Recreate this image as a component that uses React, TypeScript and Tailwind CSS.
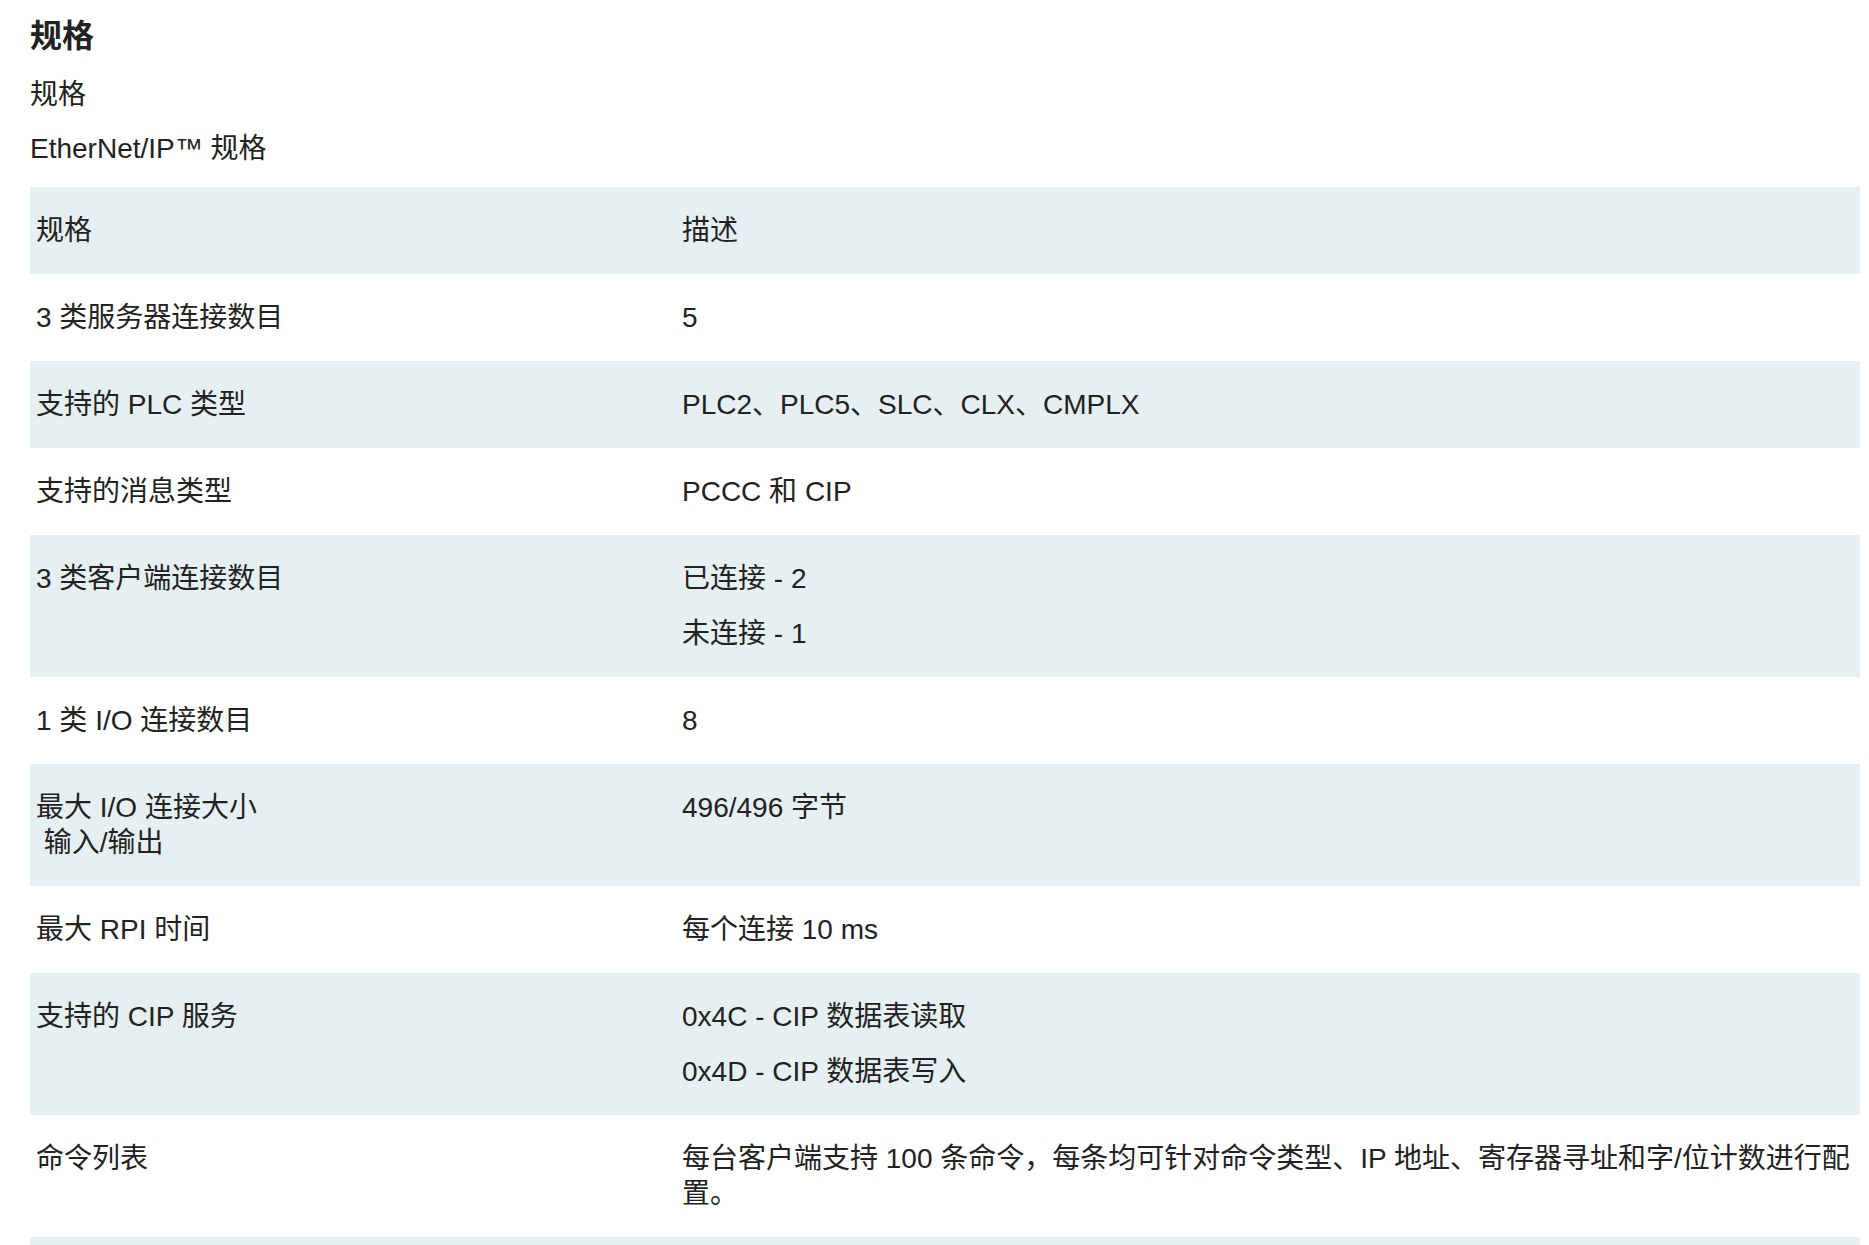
const FONT = "font-['Liberation_Sans','Noto_Sans_CJK_SC',sans-serif]"

const ROWS: { spec: string[]; desc: string[] }[] = [
  { spec: ['3 类服务器连接数目'], desc: ['5'] },
  { spec: ['支持的 PLC 类型'], desc: ['PLC2、PLC5、SLC、CLX、CMPLX'] },
  { spec: ['支持的消息类型'], desc: ['PCCC 和 CIP'] },
  { spec: ['3 类客户端连接数目'], desc: ['已连接 - 2', '未连接 - 1'] },
  { spec: ['1 类 I/O 连接数目'], desc: ['8'] },
  { spec: ['最大 I/O 连接大小', '\u00a0输入/输出'], desc: ['496/496 字节'] },
  { spec: ['最大 RPI 时间'], desc: ['每个连接 10 ms'] },
  { spec: ['支持的 CIP 服务'], desc: ['0x4C - CIP 数据表读取', '0x4D - CIP 数据表写入'] },
  {
    spec: ['命令列表'],
    desc: ['每台客户端支持 100 条命令，每条均可针对命令类型、IP 地址、寄存器寻址和字/位计数进行配置。'],
  },
  { spec: ['支持的数据类型'], desc: ['BOOL、SINT、INT、DINT、REAL'] },
]

export default function App() {
  return (
    <div className={`${FONT} min-h-screen bg-white text-[#222] pl-[30px] pr-[9px] pt-[16px] pb-10`}>
      <h2 className="text-[32px] leading-[40px] font-bold">规格</h2>
      <p className="mt-[21px] text-[28px] leading-[35px]">规格</p>
      <p className="mt-[19px] text-[28px] leading-[35px]">EtherNet/IP™ 规格</p>

      <table className="mt-[21px] w-full border-collapse text-[28px] leading-[35px]">
        <colgroup>
          <col className="w-[646px]" />
          <col />
        </colgroup>
        <thead>
          <tr className="bg-[#e6f0f2]">
            <th className="px-[6px] py-[26px] text-left font-normal align-top">规格</th>
            <th className="px-[6px] py-[26px] text-left font-normal align-top">描述</th>
          </tr>
        </thead>
        <tbody>
          {ROWS.map((r, i) => (
            <tr key={i} className={i % 2 === 1 ? 'bg-[#e6f0f2]' : 'bg-white'}>
              <td className="px-[6px] py-[26px] align-top">
                {r.spec.map((s, j) => <div key={j}>{s}</div>)}
              </td>
              <td className="px-[6px] py-[26px] align-top">
                <div className="flex flex-col gap-[20px]">
                  {r.desc.map((d, j) => <p key={j}>{d}</p>)}
                </div>
              </td>
            </tr>
          ))}
        </tbody>
      </table>
    </div>
  )
}
